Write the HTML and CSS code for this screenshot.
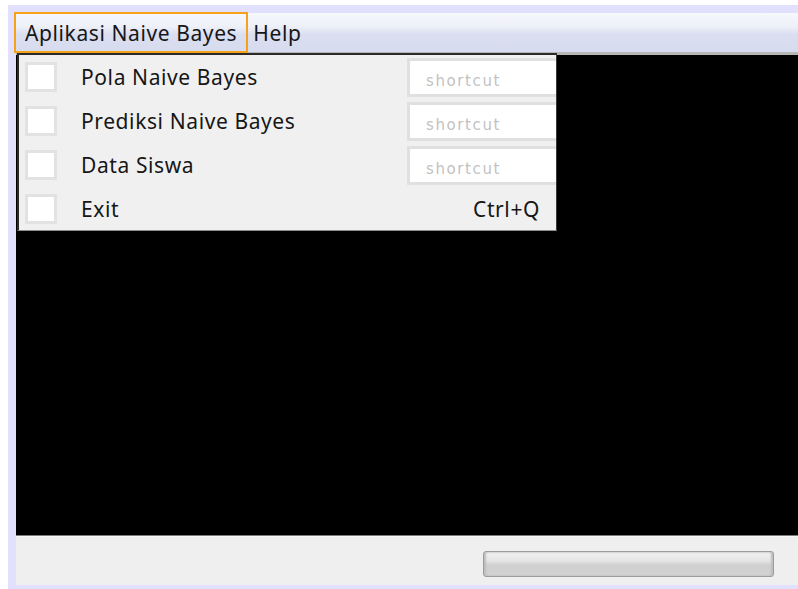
FILE: index.html
```html
<!DOCTYPE html>
<html lang="id">
<head>
<meta charset="utf-8">
<title>Aplikasi Naive Bayes</title>
<link rel="stylesheet" href="styles.css">
</head>
<body>
<div class="frame">
  <div class="window">
    <div class="menubar">
      <div class="menu menu-open">
        <span class="menu-label">Aplikasi Naive Bayes</span>
        <div class="dropdown">
          <div class="item">
            <span class="check"></span>
            <span class="item-label">Pola Naive Bayes</span>
            <span class="shortcut-field">shortcut</span>
          </div>
          <div class="item">
            <span class="check"></span>
            <span class="item-label">Prediksi Naive Bayes</span>
            <span class="shortcut-field">shortcut</span>
          </div>
          <div class="item">
            <span class="check"></span>
            <span class="item-label">Data Siswa</span>
            <span class="shortcut-field">shortcut</span>
          </div>
          <div class="item">
            <span class="check"></span>
            <span class="item-label">Exit</span>
            <span class="accel">Ctrl+Q</span>
          </div>
        </div>
      </div>
      <div class="menu"><span class="menu-label">Help</span></div>
    </div>
    <div class="canvas"></div>
    <div class="statusbar">
      <div class="progress"></div>
    </div>
  </div>
</div>
</body>
</html>
```

FILE: styles.css
```css
html, body {
  margin: 0;
  padding: 0;
  background: #ffffff;
  width: 798px;
  height: 589px;
  overflow: hidden;
}

body {
  font-family: "Noto Sans", "DejaVu Sans", sans-serif;
  color: #161616;
}

.frame {
  margin: 5px 0 0 8px;
  height: 584px;
  box-sizing: border-box;
  padding: 8px 0 4px 8px;
  background: #e1e1fd;
}

.window {
  height: 100%;
  display: flex;
  flex-direction: column;
}

/* top menu bar */
.menubar {
  position: relative;
  height: 39px;
  border-bottom: 3px solid #b6b6b6;
  background: linear-gradient(#f7f8fc 0%, #eef0f8 35%, #dadef0 55%, #d6dbee 100%);
  display: flex;
  align-items: stretch;
  z-index: 2;
}

.menu {
  display: flex;
  align-items: center;
  padding: 0 6px 0 5px;
  font-size: 21px;
  letter-spacing: 0.6px;
}

.menu-open {
  margin: -1px 0 -1px -2px;
  padding: 0 9px 0 9px;
  border: 2px solid #f5a21a;
  position: relative;
  letter-spacing: normal;
}

.menu-open .menu-label {
  letter-spacing: 0.6px;
}

/* open dropdown */
.dropdown {
  position: absolute;
  left: 1px;
  top: 39px;
  width: 537px;
  height: 175px;
  background: #f0f0f0;
  border-left: 2px solid #2a2a2a;
  border-top: 2px solid #2a2a2a;
  border-right: 1px solid #3a3a3a;
  border-bottom: 1px solid #8c8c8c;
  overflow: hidden;
}

.item {
  position: relative;
  height: 44px;
  display: flex;
  align-items: center;
  letter-spacing: 0.6px;
}

.check {
  width: 26px;
  height: 24px;
  margin-left: 6px;
  border: 3px solid #e2e2e2;
  background: #ffffff;
  flex: none;
}

.item-label {
  margin-left: 24px;
  font-size: 21px;
}

.shortcut-field {
  position: absolute;
  left: 388px;
  top: 3px;
  width: 170px;
  height: 33px;
  border: 3px solid #e0e0e0;
  background: #ffffff;
  color: #c2c2c2;
  font-family: "DejaVu Sans", sans-serif;
  font-size: 15px;
  letter-spacing: 1.6px;
  line-height: 40px;
  padding-left: 16px;
  box-sizing: content-box;
  overflow: hidden;
}

.accel {
  margin-left: auto;
  margin-right: 16px;
  font-size: 21px;
}

/* drawing area */
.canvas {
  flex: 1;
  background: #000000;
  border-bottom: 1px solid #7c7c7c;
}

.statusbar {
  height: 49px;
  background: #efefef;
  border-top: 1px solid #f8f8f8;
  box-sizing: border-box;
  display: flex;
  justify-content: flex-end;
  align-items: flex-start;
  padding: 14px 24px 0 0;
}

.progress {
  width: 289px;
  height: 24px;
  border: 1px solid #9c9c9c;
  border-radius: 3px;
  background: linear-gradient(#f2f2f2 0%, #e6e6e6 35%, #cfcfcf 55%, #d2d2d2 100%);
  box-shadow: inset 2px 0 2px #bdbdbd, inset -2px 0 2px #bdbdbd;
}
```
